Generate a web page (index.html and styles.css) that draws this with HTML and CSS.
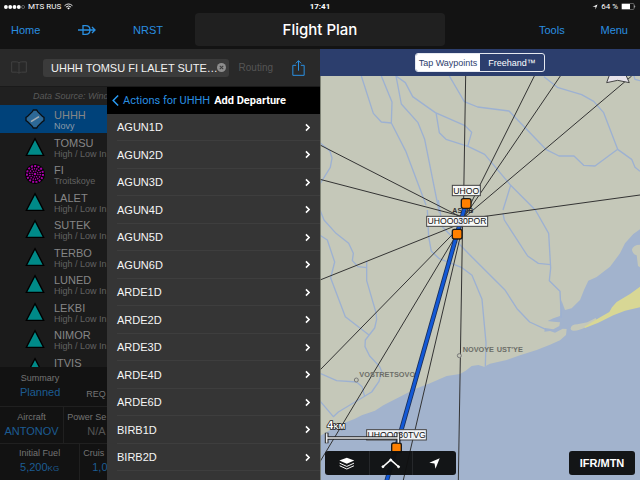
FILE: index.html
```html
<!DOCTYPE html>
<html lang="en">
<head>
    <meta charset="UTF-8">
    <title>Flight Plan</title>
    <link rel="stylesheet" href="styles.css">
</head>
<body>
    <div class="status">
        <div class="carrier">
            <svg class="dots" viewBox="0 0 22 4"><circle cx="2" cy="2" r="2"/><circle cx="6.5" cy="2" r="2"/><circle cx="11" cy="2" r="2"/><circle cx="15.5" cy="2" r="2"/><circle class="off" cx="20" cy="2" r="1.6"/></svg>
            <span>MTS RUS</span>
            <svg class="wifi" viewBox="0 0 16 12"><path d="M1 4.5Q8-1.5 15 4.5M3.4 7Q8 3 12.600 7"/><path class="fill" d="M5.500 8.800Q8 6.800 10.500 8.800L8 11.500z"/></svg>
        </div>
        <b>17:41</b>
        <div class="power">
            <svg class="loc" viewBox="0 0 12 12"><path d="M11 1L7 11V5.500H1z"/></svg>
            <span>64 %</span>
            <svg class="battery" viewBox="0 0 30 14"><rect class="shell" x="1" y="1" width="25" height="12" rx="2"/><rect x="2" y="2" width="16" height="10"/><path d="M27 4v6q3-3 0-6"/></svg>
        </div>
    </div>

    <div class="nav">
        <div class="links">
            <a href="#">Home</a>
            <a href="#" aria-label="Direct to">
                <svg class="direct" viewBox="0 0 54 30"><path d="M15 2h8q13 0 13 13t-13 13h-8zM0 15h51M42 6l9 9-9 9"/></svg>
            </a>
            <a href="#">NRST</a>
        </div>
        <h1>Flight Plan</h1>
        <div class="links right">
            <a href="#">Tools</a>
            <a href="#">Menu</a>
        </div>
    </div>

    <div class="main">
        <div class="plan">
            <div class="search">
                <svg class="book" viewBox="0 0 48 38"><path d="M24 5q-3-3-8-3H2v31h14q5 0 8 3 3-3 8-3h14V2H32q-5 0-8 3v31"/></svg>
                <div class="field">
                    <input type="text" aria-label="Route" value="UHHH TOMSU FI LALET SUTE…">
                    <button class="clear" aria-label="Clear"><svg viewBox="0 0 26 26"><circle cx="13" cy="13" r="13"/><path d="M8 8l10 10M18 8L8 18"/></svg></button>
                </div>
                <span class="routing">Routing</span>
                <button class="share" aria-label="Share"><svg viewBox="0 0 38 48"><path d="M12 16H2v30h34V16H26M19 32V2M11 10l8-8 8 8"/></svg></button>
            </div>
            <div class="body">
                <div class="list">
                    <p class="source">Data Source: Wind</p>
                    <ul class="points">
                        <li class="cur">
                            <svg viewBox="0 0 60 60"><path class="apt" d="M22 8l3-5h10l3 5 14 14 5 3v10l-5 3-14 14-3 5H25l-3-5L8 38l-5-3V25l5-3z"/><path class="rwy" d="M18 38l24-15"/></svg>
                            <div><b>UHHH</b><small>Novy</small></div>
                        </li>
                        <li>
                            <svg viewBox="0 0 60 60"><path class="tri" d="M30 5l26 50H4z"/></svg>
                            <div><b>TOMSU</b><small>High / Low In</small></div>
                        </li>
                        <li>
                            <svg viewBox="0 0 60 60"><circle cx="30" cy="30" r="30"/><circle class="ring r1" cx="30" cy="30" r="24"/><circle class="ring r2" cx="30" cy="30" r="16"/><circle class="ring" cx="30" cy="30" r="9"/><circle class="dot" cx="30" cy="30" r="4"/></svg>
                            <div><b>FI</b><small>Troitskoye</small></div>
                        </li>
                        <li>
                            <svg viewBox="0 0 60 60"><path class="tri" d="M30 5l26 50H4z"/></svg>
                            <div><b>LALET</b><small>High / Low In</small></div>
                        </li>
                        <li>
                            <svg viewBox="0 0 60 60"><path class="tri" d="M30 5l26 50H4z"/></svg>
                            <div><b>SUTEK</b><small>High / Low In</small></div>
                        </li>
                        <li>
                            <svg viewBox="0 0 60 60"><path class="tri" d="M30 5l26 50H4z"/></svg>
                            <div><b>TERBO</b><small>High / Low In</small></div>
                        </li>
                        <li>
                            <svg viewBox="0 0 60 60"><path class="tri" d="M30 5l26 50H4z"/></svg>
                            <div><b>LUNED</b><small>High / Low In</small></div>
                        </li>
                        <li>
                            <svg viewBox="0 0 60 60"><path class="tri" d="M30 5l26 50H4z"/></svg>
                            <div><b>LEKBI</b><small>High / Low In</small></div>
                        </li>
                        <li>
                            <svg viewBox="0 0 60 60"><path class="tri" d="M30 5l26 50H4z"/></svg>
                            <div><b>NIMOR</b><small>High / Low In</small></div>
                        </li>
                        <li>
                            <svg viewBox="0 0 60 60"><path class="tri" d="M30 5l26 50H4z"/></svg>
                            <div><b>ITVIS</b></div>
                        </li>
                    </ul>
                    <div class="info">
                        <div class="row wide">
                            <div><span>Summary</span><a href="#">Planned</a></div>
                            <div class="req"><span>REQ</span></div>
                        </div>
                        <div class="row">
                            <div><span>Aircraft</span><a href="#">ANTONOV</a></div>
                            <div class="cut"><span>Power Se</span><em>N/A</em></div>
                        </div>
                        <div class="row wide">
                            <div><span>Initial Fuel</span><a href="#">5,200<small>KG</small></a></div>
                            <div class="cut fuel"><span>Cruis</span><a href="#">1,0</a></div>
                        </div>
                    </div>
                </div>

                <div class="popover">
                    <div class="head">
                        <button class="back"><svg viewBox="0 0 24 40"><path d="M21 3L4 20l17 17"/></svg>Actions for UHHH</button>
                        <h2>Add Departure</h2>
                    </div>
                    <ul class="deps">
                        <li><button>AGUN1D<svg viewBox="0 0 16 26"><path d="M3 3l10 10L3 23"/></svg></button></li>
                        <li><button>AGUN2D<svg viewBox="0 0 16 26"><path d="M3 3l10 10L3 23"/></svg></button></li>
                        <li><button>AGUN3D<svg viewBox="0 0 16 26"><path d="M3 3l10 10L3 23"/></svg></button></li>
                        <li><button>AGUN4D<svg viewBox="0 0 16 26"><path d="M3 3l10 10L3 23"/></svg></button></li>
                        <li><button>AGUN5D<svg viewBox="0 0 16 26"><path d="M3 3l10 10L3 23"/></svg></button></li>
                        <li><button>AGUN6D<svg viewBox="0 0 16 26"><path d="M3 3l10 10L3 23"/></svg></button></li>
                        <li><button>ARDE1D<svg viewBox="0 0 16 26"><path d="M3 3l10 10L3 23"/></svg></button></li>
                        <li><button>ARDE2D<svg viewBox="0 0 16 26"><path d="M3 3l10 10L3 23"/></svg></button></li>
                        <li><button>ARDE3D<svg viewBox="0 0 16 26"><path d="M3 3l10 10L3 23"/></svg></button></li>
                        <li><button>ARDE4D<svg viewBox="0 0 16 26"><path d="M3 3l10 10L3 23"/></svg></button></li>
                        <li><button>ARDE6D<svg viewBox="0 0 16 26"><path d="M3 3l10 10L3 23"/></svg></button></li>
                        <li><button>BIRB1D<svg viewBox="0 0 16 26"><path d="M3 3l10 10L3 23"/></svg></button></li>
                        <li><button>BIRB2D<svg viewBox="0 0 16 26"><path d="M3 3l10 10L3 23"/></svg></button></li>
                    </ul>
                </div>
            </div>
        </div>

        <div class="chart">
            <div class="mode">
                <div class="seg">
                    <button class="on">Tap Waypoints</button>
                    <button>Freehand™</button>
                </div>
            </div>
            <div class="map">
                <svg class="canvas" viewBox="0 18 960 1212" preserveAspectRatio="xMidYMid slice">
                    <!-- sea, lagoon and sand spit -->
                    <path class="sea" d="M0 1098L40 1075 80 1056 105 1046 125 1036 165 1022 190 1006 240 980 285 957 330 940 380 918 420 912 437 902 455 888 475 885 492 890 510 881 560 870 600 856 650 840 690 824 720 811 738 795 740 777 728 776 705 788 690 783 673 785 675 774 700 778 718 768 720 757 700 755 683 753 700 745 720 738 722 715 724 690 735 720 755 715 780 690 792 660 805 632 830 621 870 590 900 550 915 520 940 492 960 478V1230H0z"/>
                    <path class="land" d="M960 524q-20 0-24 14 0 14 14 18l4 32 6 4zM752 775q2-12 20-12l30-6 25-13 5 12-35 16q-24 12-38 10-8-2-7-7z"/>
                    <path class="sand" d="M793 770l37-22 38-22 8-14 14-16 40-24 30-22v62l-45 10-35 14-45 22-40 16z"/>
                    <g class="rivers">
                        <path d="M124 18l36 112 24 26 30 3 44 86 60 160M184 18l32 78-2 63M228 18l16 84 50 56 20 50 44 220"/>
                        <path d="M228 18l28 20 22 42 68 48 89 39 20 20-12 42M348 128l10 60 20 20 66 21 50 24 78 93-23 74M572 346l74 74 40 70 6 104-4 38 32 32 4 80"/>
                        <path d="M388 18l45 77 40 16 94 12 112 116 38 19h45l29 28 34 2 68-50-42-110-30-34-36-20-73-22-40-32M893 238l42 30 10 24 15 12M942 18l3 10 15 4"/>
                        <path d="M0 218l30 26 6 20-5 28-31 50M0 420l12 30 36 40 38 30 14 30-3 22 17 18 26 3M0 496l22 14 22 66-12 48 44 116 70 54M140 572v60l28 96 2 20-6 26-28 36-1 20 14 28 30 32 6 14-8 30-22 32-100 60-15 14-55-65M0 910l50 22 60 4 16 14 8 30"/>
                        <path d="M322 420l4 80 8 44 24 22 66 26 32 24 30 72 12 130-2 70M355 390l12 80 82 84 106 106 36 56 38 40 48 22M549 430l4 20 70 108 32 22 37 4"/>
                    </g>
                    <g class="radials">
                        <path d="M437 18l-7 427M643 18L430 445M721 18L430 445M935 18L430 445M960 375L430 448M0 225l430 220M0 328l430 112M0 630l430-172M0 900l430-440M0 1175L430 460M250 1230L430 460M428 445l-13 785"/>
                    </g>
                    <path class="star" d="M868 16l-8 22 33-7 35 7-10-22z"/>
                    <g class="places">
                        <circle cx="109" cy="930" r="6"/>
                        <circle cx="418" cy="857" r="6"/>
                        <text x="118" y="920">VOSTRETSOVO</text>
                        <text x="428" y="847">NOVOYE</text>
                        <text x="530" y="847">UST'YE</text>
                    </g>
                    <text class="fix" x="397" y="428">ASTIB</text>
                    <path class="route-edge" d="M438 400l-27 92-182 640-30 104"/>
                    <path class="route" d="M438 400l-27 92-182 640-30 104"/>
                    <g class="tags">
                        <rect x="397" y="346" width="84" height="31"/>
                        <rect x="320" y="439" width="183" height="30"/>
                        <rect x="140" y="1079" width="179" height="31"/>
                        <text x="439" y="371">UHOO</text>
                        <text x="411" y="463">UHOO030POR</text>
                        <text x="230" y="1104">UHOO030TVG</text>
                    </g>
                    <g class="pins">
                        <rect x="424" y="386" width="29" height="29" rx="6"/>
                        <rect x="397" y="478" width="29" height="29" rx="6"/>
                        <rect x="215" y="1119" width="29" height="29" rx="6"/>
                    </g>
                    <g class="scale">
                        <path class="under" d="M20 1088v32M235 1088v32M20 1104h215"/>
                        <path d="M20 1090v28M235 1090v28M20 1104h215"/>
                        <text class="unit" x="40" y="1077">KM</text>
                        <text x="22" y="1077">4</text>
                    </g>
                    <path class="edge" d="M1 18v1212"/>
                </svg>
                <div class="tools">
                    <div class="group">
                        <button aria-label="Layers"><svg viewBox="0 0 48 40"><path class="fill" d="M24 2l23 9-23 10L1 11z"/><path d="M2 19l22 10 22-10M2 27l22 10 22-10"/></svg></button>
                        <button aria-label="Edit route"><svg viewBox="0 0 60 40"><path class="leg" d="M6 30L30 9l24 21"/><circle cx="6" cy="30" r="3"/><circle cx="30" cy="9" r="3"/><circle cx="54" cy="30" r="3"/></svg></button>
                        <button aria-label="My location"><svg viewBox="0 0 40 40"><path class="fill" d="M36 4L23 36l-3-16L4 18z"/></svg></button>
                    </div>
                    <button class="type">IFR/MTN</button>
                </div>
            </div>
        </div>
    </div>
</body>
</html>
```
FILE: styles.css
```css
* {
    margin: 0;
    padding: 0;
    box-sizing: border-box;
    list-style: none;
    text-decoration: none;
}

body {
    height: 100vh;
    display: flex;
    flex-direction: column;
    overflow: hidden;
    background: #131313;
    color: #fff;
    font: 11px/14px "Liberation Sans", Arial, sans-serif;
}

button {
    border: 0;
    background: none;
    color: inherit;
    font: inherit;
    cursor: pointer;
}

svg {
    display: block;
    flex: none;
}

/* status bar */
.status {
    height: 13px;
    padding: 0 4px;
    display: grid;
    grid-template-columns: 1fr auto 1fr;
    align-items: center;
    font: 8px/12px Roboto, sans-serif;
}

.status b {
    font-weight: 700;
}

.carrier,
.power {
    display: flex;
    align-items: center;
    gap: 3px;
}

.power {
    justify-content: flex-end;
}

.status svg {
    fill: #fff;
}

.dots {
    width: 21px;
    height: 4px;
}

.dots .off {
    fill: none;
    stroke: #999;
    stroke-width: 0.6;
}

.wifi {
    width: 9px;
    height: 7px;
}

.wifi path {
    fill: none;
    stroke: #fff;
    stroke-width: 1.6;
}

.wifi .fill {
    fill: #fff;
    stroke: none;
}

.loc {
    width: 6px;
    height: 6px;
}

.battery {
    width: 15px;
    height: 7px;
}

.status .shell {
    fill: none;
    stroke: #aaa;
}

/* navigation */
.nav {
    height: 36px;
    display: grid;
    grid-template-columns: 195px 1fr 195px;
    padding-bottom: 3px;
}

.nav h1 {
    border-radius: 4px;
    background: #202020;
    font: 500 15px/33px Inter, sans-serif;
    text-align: center;
}

.links {
    display: flex;
    align-items: center;
    justify-content: space-between;
    padding: 0 32px 0 11px;
}

.links.right {
    padding: 0 12px 0 94px;
}

.nav a {
    color: #2a8fe0;
}

.direct {
    width: 18px;
    height: 10px;
    fill: none;
    stroke: #2a8fe0;
    stroke-width: 4;
}

.main {
    flex: 1;
    min-height: 0;
    display: grid;
    grid-template-columns: 1fr 1fr;
}

.plan,
.chart {
    min-width: 0;
    min-height: 0;
    display: flex;
    flex-direction: column;
}

/* route field */
.search {
    height: 38px;
    display: flex;
    align-items: center;
    padding: 0 15px 0 11px;
    background: #292929;
    border-bottom: 1px solid #1a1a1a;
}

.book {
    width: 16px;
    height: 13px;
    fill: none;
    stroke: #414141;
    stroke-width: 3;
}

.field {
    flex: 1;
    min-width: 0;
    height: 18px;
    display: flex;
    align-items: center;
    margin: 0 10px 0 16px;
    padding: 0 3px 0 8px;
    border-radius: 3px;
    background: #3b3b3b;
}

.field input {
    flex: 1;
    min-width: 0;
    border: 0;
    outline: 0;
    background: none;
    color: #f2f2f2;
    font: inherit;
}

.clear svg {
    width: 9px;
    height: 9px;
    fill: #8e8e8e;
    stroke: #3b3b3b;
    stroke-width: 3;
}

.clear circle {
    stroke: none;
}

.routing {
    color: #555;
    font-size: 10px;
}

.share {
    margin-left: 19px;
}

.share svg {
    width: 13px;
    height: 16px;
    fill: none;
    stroke: #2a8fe0;
    stroke-width: 3;
}

.body {
    flex: 1;
    min-height: 0;
    display: flex;
    overflow: hidden;
    background: #1b1b1b;
}

.list {
    flex: 1;
    min-width: 0;
    display: flex;
    flex-direction: column;
    white-space: nowrap;
    overflow: hidden;
}

.source {
    height: 18px;
    padding-left: 33px;
    background: #202020;
    color: #5a5a5a;
    font: italic 9px/18px "Liberation Sans", Arial, sans-serif;
}

.points {
    flex: 1;
    min-height: 0;
    overflow: hidden;
}

.points li {
    height: 27px;
    display: flex;
    gap: 9px;
    padding: 4px 0 0 25px;
}

.points li:nth-child(odd) {
    height: 28px;
}

.points .cur {
    background: #00427a;
}

.points div {
    flex: 1;
    min-width: 0;
}

.points svg {
    width: 20px;
    height: 20px;
}

.points b,
.points small {
    display: block;
    font-weight: normal;
}

.points b {
    color: #868686;
    font-size: 11px;
    line-height: 12px;
}

.points small {
    color: #626262;
    font-size: 9px;
    line-height: 10px;
}

.points .cur small {
    color: #8a9aa8;
}

.apt {
    fill: #2d6896;
    stroke: #0a0f14;
    stroke-width: 4;
}

.rwy {
    stroke: #a5adb3;
    stroke-width: 5;
}

.tri {
    fill: #008a88;
    stroke: #000;
    stroke-width: 4;
}

.ring {
    fill: none;
    stroke: #a800a8;
    stroke-width: 4;
    stroke-dasharray: 4 3;
}

.r1 {
    stroke-width: 6;
    stroke-dasharray: 6 4;
}

.r2 {
    stroke-width: 5;
}

.dot {
    fill: #a800a8;
}

/* trip summary */
.info {
    background: #121212;
    color: #747474;
    text-align: center;
}

.row {
    height: 37px;
    display: grid;
    grid-template-columns: 3fr 2fr;
    border-top: 1px solid #202020;
}

.row.wide {
    grid-template-columns: 3fr 1fr;
}

.row:first-child {
    height: 39px;
    border-top: 0;
}

.row div {
    min-width: 0;
    padding-top: 3px;
    border-right: 1px solid #202020;
}

.row div:last-child {
    border-right: 0;
}

.row:first-child div {
    padding-top: 4px;
    border-right: 0;
}

.row:last-child div {
    padding-top: 2px;
}

.row span,
.row a,
.row em {
    display: block;
    font-style: normal;
}

.row span {
    font-size: 9px;
}

.row:first-child .req {
    padding: 20px 0 0 6px;
    text-align: left;
}

.row a {
    color: #1c5c92;
}

.row em {
    color: #555;
}

.row a small {
    font-size: 8px;
}

.row .cut {
    padding-left: 3px;
    text-align: left;
}

.cut em {
    padding-left: 20px;
}

.cut.fuel a {
    padding-left: 9px;
}

/* departures menu */
.popover {
    flex: none;
    width: 213px;
    background: #353535;
}

.head {
    height: 27px;
    display: flex;
    align-items: center;
    gap: 4px;
    padding-left: 5px;
    background: #000;
    font: 11px/14px Roboto, sans-serif;
    white-space: nowrap;
}

.head h2 {
    font-size: 11px;
    font-weight: 700;
}

.back {
    display: flex;
    align-items: center;
    gap: 4px;
    color: #2a8fe0;
}

.back svg {
    width: 7px;
    height: 13px;
    fill: none;
    stroke: #2a9cf5;
    stroke-width: 5;
}

.deps {
    padding-left: 10px;
}

.deps li {
    height: 27px;
    border-bottom: 1px solid #3e3e3e;
}

.deps li:nth-child(even) {
    height: 28px;
}

.deps button {
    width: 100%;
    height: 100%;
    display: flex;
    align-items: center;
    justify-content: space-between;
    padding-right: 10px;
    color: #f5f5f5;
}

.deps svg {
    width: 5px;
    height: 9px;
    fill: none;
    stroke: #fff;
    stroke-width: 5;
}

/* map side */
.mode {
    height: 27px;
    padding-top: 4px;
    display: flex;
    justify-content: center;
    background: #2c3e6d;
}

.seg {
    width: 130px;
    height: 19px;
    display: grid;
    grid-template-columns: 1fr 1fr;
    border: 1px solid #e6e9f0;
    border-radius: 3px;
    overflow: hidden;
    font-size: 9px;
    white-space: nowrap;
}

.seg .on {
    background: #fff;
    color: #2c3e6d;
}

.map {
    flex: 1;
    min-height: 0;
    position: relative;
    background: #c5c8b9;
}

.canvas {
    width: 100%;
    height: 100%;
    font-family: "Liberation Sans", Arial, sans-serif;
}

.sea {
    fill: #a2b3cd;
}

.land {
    fill: #c5c8b9;
}

.sand {
    fill: #d8d795;
}

.rivers {
    fill: none;
    stroke: #9db1d2;
    stroke-width: 4;
    stroke-linejoin: round;
}

.radials {
    fill: none;
    stroke: #333;
    stroke-width: 3;
}

.edge {
    stroke: #707468;
    stroke-width: 3;
}

.star {
    fill: #e6e2ea;
    stroke: #444;
    stroke-width: 3;
}

.places circle {
    fill: #c5c8b9;
    stroke: #777;
    stroke-width: 3;
}

.places text {
    fill: #6c6e68;
    font-size: 22px;
    font-weight: bold;
}

.fix {
    fill: #333;
    font-size: 21px;
    font-weight: bold;
}

.route-edge,
.route {
    fill: none;
    stroke: #1b2f57;
    stroke-width: 14;
}

.route {
    stroke: #1258d6;
    stroke-width: 9;
}

.tags rect {
    fill: rgba(255, 255, 255, 0.88);
    stroke: #444;
    stroke-width: 3;
}

.tags text {
    fill: #111;
    font-size: 26px;
    text-anchor: middle;
}

.pins rect {
    fill: #ff8000;
    stroke: #1a1a1a;
    stroke-width: 4;
}

.scale path {
    fill: none;
    stroke: #e9eaec;
    stroke-width: 5;
}

.scale .under {
    stroke: #222;
    stroke-width: 11;
}

.scale text {
    fill: #fff;
    stroke: #222;
    stroke-width: 5;
    paint-order: stroke;
    font-size: 32px;
    font-weight: bold;
}

.scale .unit {
    font-size: 23px;
}

.tools {
    position: absolute;
    left: 5px;
    right: 5px;
    bottom: 5px;
    display: flex;
    justify-content: space-between;
}

.group,
.type {
    height: 24px;
    border-radius: 3px;
    background: rgba(14, 15, 17, 0.97);
}

.group {
    width: 131px;
    display: grid;
    grid-template-columns: repeat(3, 1fr);
}

.group button {
    display: flex;
    align-items: center;
    justify-content: center;
    border-left: 1px solid #26282b;
}

.group button:first-child {
    border-left: 0;
}

.group svg {
    height: 13px;
    fill: #fff;
    stroke: #fff;
    stroke-width: 3;
}

.group path {
    fill: none;
}

.group .leg {
    stroke-width: 5;
}

.group .fill {
    fill: #fff;
    stroke: none;
}

.type {
    width: 66px;
    font-weight: bold;
}
```
